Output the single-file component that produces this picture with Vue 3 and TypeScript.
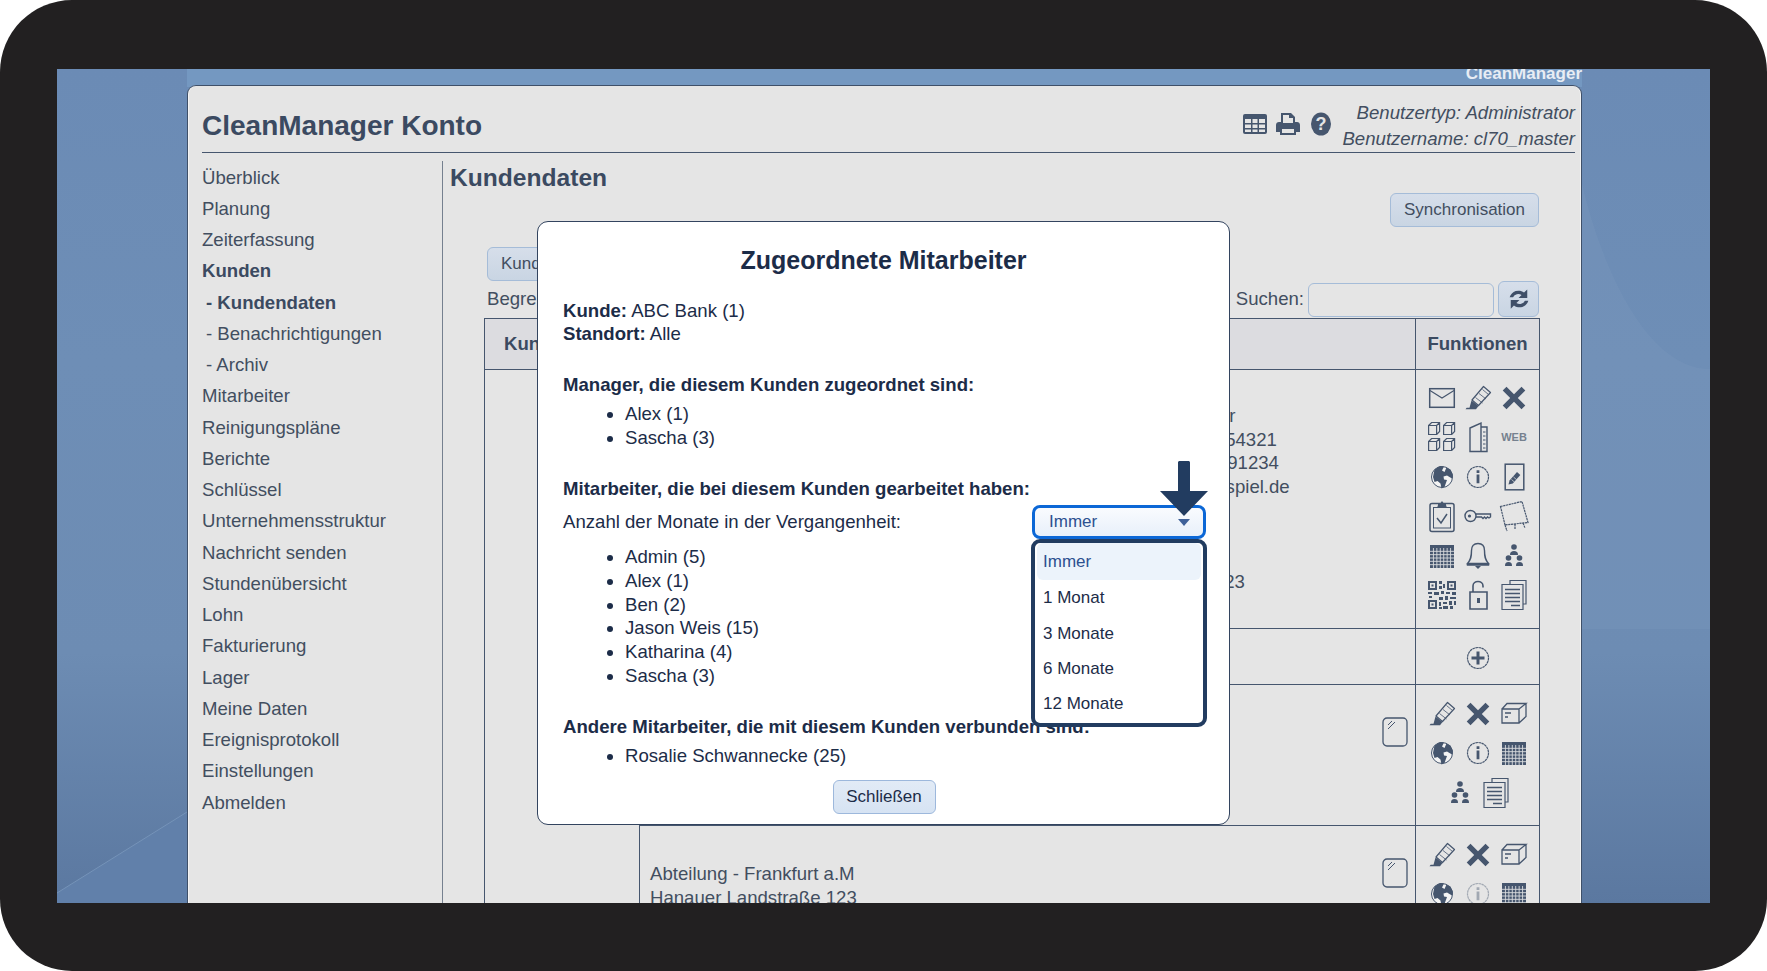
<script setup lang="ts">
const navItems = [
  { label: 'Überblick' },
  { label: 'Planung' },
  { label: 'Zeiterfassung' },
  { label: 'Kunden', bold: true },
  { label: '- Kundendaten', bold: true, sub: true },
  { label: '- Benachrichtigungen', sub: true },
  { label: '- Archiv', sub: true },
  { label: 'Mitarbeiter' },
  { label: 'Reinigungspläne' },
  { label: 'Berichte' },
  { label: 'Schlüssel' },
  { label: 'Unternehmensstruktur' },
  { label: 'Nachricht senden' },
  { label: 'Stundenübersicht' },
  { label: 'Lohn' },
  { label: 'Fakturierung' },
  { label: 'Lager' },
  { label: 'Meine Daten' },
  { label: 'Ereignisprotokoll' },
  { label: 'Einstellungen' },
  { label: 'Abmelden' },
]

const c = '#46566e'
const box = (x: number, y: number) =>
  `<g transform="translate(${x} ${y})" fill="none" stroke="${c}" stroke-width="1.2"><path d="M0.6 3.5h8v9h-8zM0.6 3.5l3-3h8v9l-3 3M8.6 3.5l3-3"/></g>`
const grid = (x: number, y: number, w: number, h: number, n: number, m: number) => {
  let d = ''
  for (let i = 1; i < n; i++) d += `M${x + (w * i) / n} ${y}v${h}`
  for (let j = 1; j < m; j++) d += `M${x} ${y + (h * j) / m}h${w}`
  return d
}
const infoMarkup = `<circle cx="18" cy="18" r="10.5" fill="none" stroke="${c}" stroke-width="1.2" stroke-dasharray="2.6 .5"/><path fill="${c}" d="M16.6 15.5h2.8v8.7h-2.8zM16.6 11.3h2.8v2.7h-2.8z"/>`

const icons: Record<string, string> = {
  mail: `<g fill="none" stroke="${c}" stroke-width="1.5"><rect x="5.7" y="8.7" width="24.6" height="18.6"/><path d="M6 10.5l12 7.500 12-7.500" stroke-width="1.1"/></g>`,
  pen: `<g fill="none" stroke="${c}" stroke-width="1.200" stroke-linejoin="round"><path d="M12 20L23.500 6.500 30.500 12.500 18.500 25.500z"/><path d="M15.500 17.500l7 5.500M19 13.500l7 5.500M22.500 9.500l6 5" stroke-width=".8"/><path fill="${c}" stroke="none" d="M11.500 20.500l7 5.500-2.500 3.300H5.500l1.200-1.500h2.800z"/></g>`,
  x: `<path fill="${c}" d="M10.500 6.800l7.500 7.500 7.500-7.500 3.800 3.800-7.500 7.400 7.500 7.500-3.800 3.700-7.500-7.400-7.500 7.400-3.800-3.700 7.500-7.500-7.500-7.400z"/>`,
  boxes: box(4, 3) + box(19, 3) + box(4, 19) + box(19, 19),
  door: `<g fill="none" stroke="${c}" stroke-width="1.400"><path d="M10 9l11-5v28.500H10zM21 8h6v24.500h-6"/><path stroke-width="1" d="M23 13h2.500M23 17h2.500M23 21h2.500M23 25h2.500M23 29h2.500"/></g>`,
  web: `<text x="18" y="22" text-anchor="middle" font-family="Liberation Sans, sans-serif" font-size="11" font-weight="700" fill="#76818f">WEB</text>`,
  globe: `<circle cx="18" cy="18" r="10.500" fill="#f4f4f4" stroke="${c}" stroke-width="1"/><path fill="${c}" d="M10.500 10.500l5.500-3.500 4 .5-2 4 2.500 1.500 2-4.500 4 2 2.500 5.500-1 3.500-5-3-3.500 1 .5 3 3 .5-2.500 7-3 1.500-1-5-3-2.500-3 1-1.500-5z"/>`,
  info: infoMarkup,
  infoFaded: `<g opacity=".42">${infoMarkup}</g>`,
  docpen: `<rect x="9.200" y="5.200" width="18.600" height="25.600" fill="none" stroke="${c}" stroke-width="1.500"/><path fill="${c}" d="M12.500 25.500l1-4 7.500-8.500 3.300 2.900-7.500 8.500z"/><path stroke="#e5e5e5" stroke-width=".7" d="M15.500 20.500l3 2.600M17.500 18l3 2.600"/>`,
  clip: `<g fill="none" stroke="${c}" stroke-width="1.500"><rect x="6" y="5.500" width="24" height="28" rx="2"/><rect x="9.500" y="9.500" width="17" height="20.500" stroke-width="1"/><path d="M13 20l4 5 6-9"/></g><path fill="${c}" d="M14 7V5h2.500L18 3l1.500 2H22v2l1 3H13z"/>`,
  key: `<g fill="none" stroke="${c}" stroke-width="1.400"><circle cx="10.500" cy="18" r="5.500"/><path d="M16 16h14.500v3l-1.500 1-1.500-1-1.500 1.500-1.500-1.500-1.500 1.500-1.500-1.500H16"/></g><circle cx="9.500" cy="18" r="1.600" fill="${c}"/>`,
  map: `<g fill="none" stroke="${c}" stroke-width="1.200" stroke-dasharray="2.200 .6"><path d="M4.500 8.500L26 3.500l6 21-23 2.500z"/><path d="M9 27l2 6M19 26v5M27 25l2 5"/></g>`,
  cal: `<rect x="6" y="7" width="24" height="23" fill="${c}"/><path stroke="#d9dbde" stroke-width=".9" d="${grid(6, 10, 24, 20, 7, 6)}"/>`,
  bell: `<path fill="none" stroke="${c}" stroke-width="1.400" d="M18 5.500c-4.500 0-6.500 3-6.500 7 0 6-.5 9-4 13h21c-3.500-4-4-7-4-13 0-4-2-7-6.500-7zM7.500 25.500V27h21v-1.500"/><path fill="${c}" d="M15 28h6l-3 3z"/>`,
  org: `<g fill="${c}"><circle cx="18" cy="9" r="2.800"/><path d="M14 17c0-3 1.500-4 4-4s4 1 4 4z"/><circle cx="12.500" cy="20" r="2.800"/><path d="M9 28c0-3 1-4 3.500-4s3.500 1 3.500 4z"/><circle cx="23.500" cy="20" r="2.800"/><path d="M20 28c0-3 1-4 3.500-4s3.500 1 3.500 4z"/></g>`,
  qr: `<g fill="${c}"><path fill-rule="evenodd" d="M4 4h9v9H4zM6 6v5h5V6zM23 4h9v9h-9zM25 6v5h5V6zM4 23h9v9H4zM6 25v5h5v-5z"/><path d="M7.500 7.500h2v2h-2zM26.500 7.500h2v2h-2zM7.500 26.500h2v2h-2zM15 4h3v3h-3zM19 7h2v4h-2zM15 9h3v3h-3zM4 15h4v2H4zM10 15h5v3h-5zM17 14h3v3h-3zM22 15h4v2h-4zM28 15h4v3h-4zM5 19h3v2H5zM15 20h4v3h-4zM21 19h3v4h-3zM26 20h6v2h-6zM15 25h2v4h-2zM19 25h4v2h-4zM25 24h3v4h-3zM30 24h2v4h-2zM19 29h5v3h-5zM26 29h3v3h-3zM15 30h3v2h-3z"/></g>`,
  lock: `<path fill="none" stroke="${c}" stroke-width="1.600" d="M10 15h17v17H10zM13 15V9c0-6 10-6 10 0v1.500"/><path fill="${c}" d="M17 21h3v5h-3z"/>`,
  docs: `<g fill="none" stroke="${c}" stroke-width="1.200"><path d="M14 7V3.500h16V27h-3"/><path d="M6 7.500h21v25H6z"/><path stroke-width="1.500" d="M9 12.500h15M9 16.500h15M9 20.500h15M9 24.500h15M15 28.500h9"/></g>`,
  plus: `<circle cx="18" cy="18" r="10.500" fill="none" stroke="${c}" stroke-width="1.200" stroke-dasharray="2.600 .5"/><path fill="${c}" d="M16.500 11.500h3v5h5v3h-5v5h-3v-5h-5v-3h5z"/>`,
  carton: `<g fill="none" stroke="${c}" stroke-width="1.300"><path d="M6 13h17v14H6zM6 13l5-5.500h19L23 13M30 7.500v13L23 27"/><path d="M9 17h6M9 21h3" stroke-width="1.500"/></g>`,
}

const fullSet = ['mail', 'pen', 'x', 'boxes', 'door', 'web', 'globe', 'info', 'docpen', 'clip', 'key', 'map', 'cal', 'bell', 'org', 'qr', 'lock', 'docs']
const subSet = ['pen', 'x', 'carton', 'globe', 'info', 'cal', 'org', 'docs']
const subSet2 = ['pen', 'x', 'carton', 'globe', 'infoFaded', 'cal']

const managers = ['Alex (1)', 'Sascha (3)']
const workers = ['Admin (5)', 'Alex (1)', 'Ben (2)', 'Jason Weis (15)', 'Katharina (4)', 'Sascha (3)']
const months = ['Immer', '1 Monat', '3 Monate', '6 Monate', '12 Monate']
</script>

<template>
  <div class="frame">
    <div class="screen">
      <svg class="wallpaper" viewBox="0 0 1653 834" preserveAspectRatio="none" aria-hidden="true">
        <defs>
          <linearGradient id="wall" x1="0" y1="0" x2="0" y2="1">
            <stop offset="0" stop-color="#6b8bb5" />
            <stop offset="0.35" stop-color="#6e8eb6" />
            <stop offset="0.7" stop-color="#6d8cb3" />
            <stop offset="1" stop-color="#5b78a0" />
          </linearGradient>
        </defs>
        <rect width="1653" height="834" fill="url(#wall)" />
        <rect x="130" width="1395" height="18" fill="#7498c1" />
        <path d="M0 824L130 743V834H0z" fill="#6180aa" />
        <path d="M0 824L130 743" stroke="#7593b8" stroke-width="1" fill="none" />
        <path d="M1525 115C1545 200 1590 300 1653 300V560H1525z" fill="#7f9cc0" opacity=".28" />
      </svg>

      <div class="brand">CleanManager</div>

      <div class="card">
        <header class="head">
          <h1 class="title">CleanManager Konto</h1>
          <div class="head-right">
            <svg class="hicon hicon-table" width="26" height="22" viewBox="0 0 26 22">
              <rect x="1" y="1" width="24" height="20" rx="2" fill="#46566e" />
              <path fill="#e5e5e5" d="M3 6h6v4H3zM10.500 6h5v4h-5zM17 6h6v4h-6zM3 11.500h6V15H3zM10.500 11.500h5V15h-5zM17 11.500h6V15h-6zM3 16.500h6V19H3zM10.500 16.500h5V19h-5zM17 16.500h6V19h-6z" />
            </svg>
            <svg class="hicon hicon-print" width="24" height="24" viewBox="0 0 24 24">
              <path fill="#46566e" fill-rule="evenodd" d="M5 1h10l4 4v5h2c1.700 0 3 1.300 3 3v7h-4v3H4v-3H0v-7c0-1.700 1.300-3 3-3h2zm2 2v8h10V6h-4V3zM6 17v4h12v-4z" />
            </svg>
            <svg class="hicon hicon-help" width="20" height="24" viewBox="0 0 20 24">
              <ellipse cx="10" cy="12" rx="10" ry="11.500" fill="#46566e" />
              <text x="10" y="18" text-anchor="middle" font-family="Liberation Sans, sans-serif" font-size="18" font-weight="700" fill="#e5e5e5">?</text>
            </svg>
            <div class="user">
              <div>Benutzertyp: Administrator</div>
              <div>Benutzername: cl70_master</div>
            </div>
          </div>
        </header>

        <div class="body">
          <nav class="side">
            <div v-for="item in navItems" :key="item.label" class="nav" :class="{ bold: item.bold, sub: item.sub }">{{ item.label }}</div>
          </nav>

          <main class="main">
            <h2 class="h2">Kundendaten</h2>
            <div class="sync-row"><button class="btn">Synchronisation</button></div>
            <div class="add-row"><button class="btn">Kunde hinzufügen</button></div>
            <div class="filter">
              <span>Begrenzen auf:</span>
              <div class="search">
                <span>Suchen:</span>
                <div class="input"></div>
                <button class="btn refresh" aria-label="Aktualisieren">
                  <svg width="22" height="24" viewBox="0 0 24 24">
                    <path fill="#3f4f68" d="M21 1.500v9.500h-9.500l3.300-3.300a6.300 6.300 0 0 0-9.300 2.300H1.800A10 10 0 0 1 17.500 5zM3 22.500V13h9.500l-3.300 3.300a6.300 6.300 0 0 0 9.300-2.300h3.700A10 10 0 0 1 6.500 19z" />
                  </svg>
                </button>
              </div>
            </div>

            <div class="table">
              <div class="thead">
                <div class="th-k">Kunde</div>
                <div class="th-f">Funktionen</div>
              </div>
              <div class="tbody">
                <div class="c-kunde"></div>
                <div class="rows">
                  <div class="row r1">
                    <div class="c-info contact">
                      <div class="indent">Ansprechpartner</div>
                      <div class="indent">Tel.: 01234 / 7654321</div>
                      <div class="indent">Fax: 01234 / 7891234</div>
                      <div class="outdent">verwaltung@beispiel.de</div>
                      <div class="gap">Kundenkonto: 123</div>
                    </div>
                    <div class="c-fn icons">
                      <svg v-for="n in fullSet" :key="n" class="ic" viewBox="0 0 36 36" v-html="icons[n]"></svg>
                    </div>
                  </div>
                  <div class="row r2">
                    <div class="c-info"></div>
                    <div class="c-fn center">
                      <svg class="ic-plain" viewBox="0 0 36 36" v-html="icons.plus"></svg>
                    </div>
                  </div>
                  <div class="row r3">
                    <div class="c-info with-tab">
                      <svg class="tab" viewBox="0 0 26 30"><rect x="1" y="1" width="24" height="28" rx="4" fill="none" stroke="#46566e" stroke-width="1.300" /><path d="M6 12l7-7M6 8l4-4" stroke="#46566e" stroke-width="1" /></svg>
                    </div>
                    <div class="c-fn icons">
                      <svg v-for="n in subSet" :key="n" class="ic" viewBox="0 0 36 36" v-html="icons[n]"></svg>
                    </div>
                  </div>
                  <div class="row r4">
                    <div class="c-info with-tab">
                      <div class="addr">
                        <div>Abteilung - Frankfurt a.M</div>
                        <div>Hanauer Landstraße 123</div>
                      </div>
                      <svg class="tab" viewBox="0 0 26 30"><rect x="1" y="1" width="24" height="28" rx="4" fill="none" stroke="#46566e" stroke-width="1.300" /><path d="M6 12l7-7M6 8l4-4" stroke="#46566e" stroke-width="1" /></svg>
                    </div>
                    <div class="c-fn icons">
                      <svg v-for="n in subSet2" :key="n" class="ic" viewBox="0 0 36 36" v-html="icons[n]"></svg>
                    </div>
                  </div>
                </div>
              </div>
            </div>
          </main>
        </div>
      </div>

      <section class="modal">
        <h3 class="m-title">Zugeordnete Mitarbeiter</h3>
        <p class="m-line m-first"><b>Kunde:</b> ABC Bank (1)</p>
        <p class="m-line"><b>Standort:</b> Alle</p>
        <p class="m-line m-head"><b>Manager, die diesem Kunden zugeordnet sind:</b></p>
        <ul class="m-list">
          <li v-for="m in managers" :key="m">{{ m }}</li>
        </ul>
        <p class="m-line m-head"><b>Mitarbeiter, die bei diesem Kunden gearbeitet haben:</b></p>
        <div class="m-select-row">
          <span>Anzahl der Monate in der Vergangenheit:</span>
          <div class="select">
            <span>Immer</span>
            <i class="caret"></i>
            <svg class="pointer" width="48" height="56" viewBox="0 0 48 56"><path fill="#223c60" d="M18 1.500c0-.8.700-1.500 1.500-1.500h9c.8 0 1.500.7 1.500 1.500V30h18L24 55 0 30h18z" /></svg>
            <div class="menu">
              <div v-for="(mo, i) in months" :key="mo" class="opt" :class="{ active: i === 0 }">{{ mo }}</div>
            </div>
          </div>
        </div>
        <ul class="m-list m-list-wide">
          <li v-for="w in workers" :key="w">{{ w }}</li>
        </ul>
        <p class="m-line m-head"><b>Andere Mitarbeiter, die mit diesem Kunden verbunden sind:</b></p>
        <ul class="m-list">
          <li>Rosalie Schwannecke (25)</li>
        </ul>
        <div class="m-foot"><button class="btn close">Schließen</button></div>
      </section>
    </div>
  </div>
</template>

<style>
html, body { margin: 0; background: #fff; }
</style>

<style scoped>
.frame {
  width: 1767px;
  height: 971px;
  box-sizing: border-box;
  padding: 69px 57px 68px;
  background: #222021;
  border-radius: 72px;
  font-family: "Liberation Sans", Arial, sans-serif;
  color: #424e60;
  font-size: 18.6px;
}
.screen { position: relative; width: 1653px; height: 834px; overflow: hidden; }
.wallpaper { position: absolute; inset: 0; width: 100%; height: 100%; }
.brand {
  position: relative;
  height: 16px;
  margin-right: 128px;
  text-align: right;
  font-size: 17px;
  font-weight: 700;
  line-height: 9px;
  color: #e8edf4;
}
.card {
  position: relative;
  margin: 0 128px 0 130px;
  height: 900px;
  box-sizing: border-box;
  background: #e5e5e5;
  border: 1px solid #3f5069;
  border-bottom: 0;
  border-radius: 9px 9px 0 0;
  box-shadow: inset 1px 0 #f4f4f4, inset -1px 0 #f4f4f4;
  padding: 0 6px 0 14px;
}
.head {
  display: flex;
  justify-content: space-between;
  align-items: center;
  height: 67px;
  box-sizing: border-box;
  padding-top: 14px;
  border-bottom: 1px solid #46566e;
}
.title { margin: 0; font-size: 28px; font-weight: 700; color: #3b4a61; }
.head-right { display: flex; align-items: center; gap: 10px; }
.hicon { margin-bottom: 5px; }
.hicon-table { margin-right: -2px; }
.hicon-print { margin-right: 1px; }
.hicon-help { margin-right: 1px; }
.user { text-align: right; font-style: italic; line-height: 26px; color: #424e60; }
.body { display: flex; margin-top: 8px; }
.side { width: 240px; flex: none; padding-top: 0.5px; border-right: 1px solid #75808f; min-height: 740px; }
.nav { height: 31.25px; line-height: 31.25px; white-space: nowrap; }
.nav.bold { font-weight: 700; color: #3b4a61; }
.nav.sub { padding-left: 4px; }
.main { flex: 1; min-width: 0; padding: 0.5px 36px 0 7px; }
.h2 { margin: 0 0 0.5px; font-size: 24.6px; line-height: 31px; font-weight: 700; color: #3b4a61; }
.sync-row { display: flex; justify-content: flex-end; }
.add-row { margin: 20px 0 0 37px; }
.btn {
  height: 34px;
  padding: 0 13px;
  border: 1px solid #a5bcd8;
  border-radius: 6px;
  background: linear-gradient(#d6deea, #c9d5e3);
  font-family: inherit;
  font-size: 17px;
  color: #424e60;
}
.filter { display: flex; justify-content: space-between; align-items: center; height: 34px; margin: 1px 0 0 37px; }
.search { display: flex; align-items: center; }
.input { width: 184px; height: 32px; margin: 1px 0 0 4px; border: 1px solid #a5bcd8; border-radius: 6px; }
.refresh { width: 41px; height: 36px; margin-left: 4px; padding: 0; display: flex; align-items: center; justify-content: center; }
.table { margin: 2px -1px 0 34px; border-top: 1px solid #46566e; border-left: 1px solid #46566e; border-right: 1px solid #46566e; }
.thead { display: flex; justify-content: space-between; height: 50px; line-height: 50px; background: #dcdce0; border-bottom: 1px solid #46566e; font-weight: 700; color: #3b4a61; }
.th-k { padding-left: 19px; }
.th-f { width: 123px; text-align: center; border-left: 1px solid #46566e; }
.tbody { display: flex; }
.c-kunde { width: 154px; flex: none; border-right: 1px solid #46566e; }
.rows { flex: 1; min-width: 0; }
.row { display: flex; border-bottom: 1px solid #46566e; }
.c-info { flex: 1; min-width: 0; }
.c-fn { width: 123px; flex: none; border-left: 1px solid #46566e; }
.r1 { height: 258px; }
.r2 { height: 55px; }
.r3 { height: 140px; }
.r4 { height: 200px; border-bottom: 0; }
.contact { padding: 34px 0 0 454px; line-height: 23.7px; white-space: nowrap; overflow: hidden; }
.contact .indent { padding-left: 4px; }
.contact .outdent { margin-left: -2px; }
.contact .gap { margin-top: 71px; }
.center { display: flex; align-items: center; justify-content: center; }
.ic-plain { width: 36px; height: 36px; margin-top: 2px; }
.icons { display: flex; flex-wrap: wrap; justify-content: center; align-content: flex-start; padding-top: 10px; }
.r3 .icons, .r4 .icons { padding-top: 11px; }
.ic { width: 36px; height: 36px; margin-bottom: 3.4px; flex: none; }
.with-tab { display: flex; justify-content: flex-end; padding: 32px 7px 0 10px; }
.r4 .with-tab { justify-content: space-between; padding-top: 32px; }
.tab { width: 26px; height: 30px; flex: none; }
.addr { line-height: 24px; margin-top: 4px; }

.modal {
  position: absolute;
  left: 480px;
  top: 152px;
  width: 693px;
  height: 604px;
  box-sizing: border-box;
  padding: 23px 23px 0 25px;
  background: #fff;
  border: 1px solid #33445f;
  border-radius: 11px;
  color: #1c2c48;
}
.m-title { margin: 0; text-align: center; font-size: 25px; line-height: 30px; font-weight: 700; padding-right: 2px; }
.m-line { margin: 0; line-height: 23.7px; }
.m-first { margin-top: 23.5px; }
.m-head { margin-top: 27px; }
.m-list { margin: 5.6px 0 0; padding: 0 0 0 62px; line-height: 23.7px; }
.m-select-row { display: flex; justify-content: space-between; align-items: center; height: 34px; margin-top: 5px; }
.m-list-wide { margin-top: 6px; }
.select {
  position: relative;
  width: 174px;
  height: 34px;
  box-sizing: border-box;
  display: flex;
  align-items: center;
  padding-left: 14px;
  border: 3px solid #0b67d6;
  border-radius: 8px;
  background: linear-gradient(#f9fbfe, #e8f0fa);
  font-size: 17px;
  color: #2d5090;
}
.caret {
  position: absolute;
  right: 13px;
  top: 11px;
  border-left: 6px solid transparent;
  border-right: 6px solid transparent;
  border-top: 7px solid #3f6199;
}
.pointer { position: absolute; left: 125px; top: -47px; }
.menu {
  position: absolute;
  left: -4px;
  top: 31px;
  width: 176px;
  height: 188px;
  box-sizing: border-box;
  padding: 0 2px;
  background: #fff;
  border: 4px solid #223c60;
  border-radius: 9px;
  color: #1c2c48;
}
.opt { height: 35.4px; line-height: 35.4px; padding-left: 6px; }
.opt.active { background: #ecf3fb; border-radius: 6px; color: #2d5090; height: 37px; line-height: 37px; }
.m-foot { display: flex; justify-content: center; margin-top: 12px; padding-right: 1px; }
.close { width: 103px; padding: 0; background: linear-gradient(#e2ebf6, #d6e3f3); border-color: #9db8dc; color: #1c2c48; }
</style>
